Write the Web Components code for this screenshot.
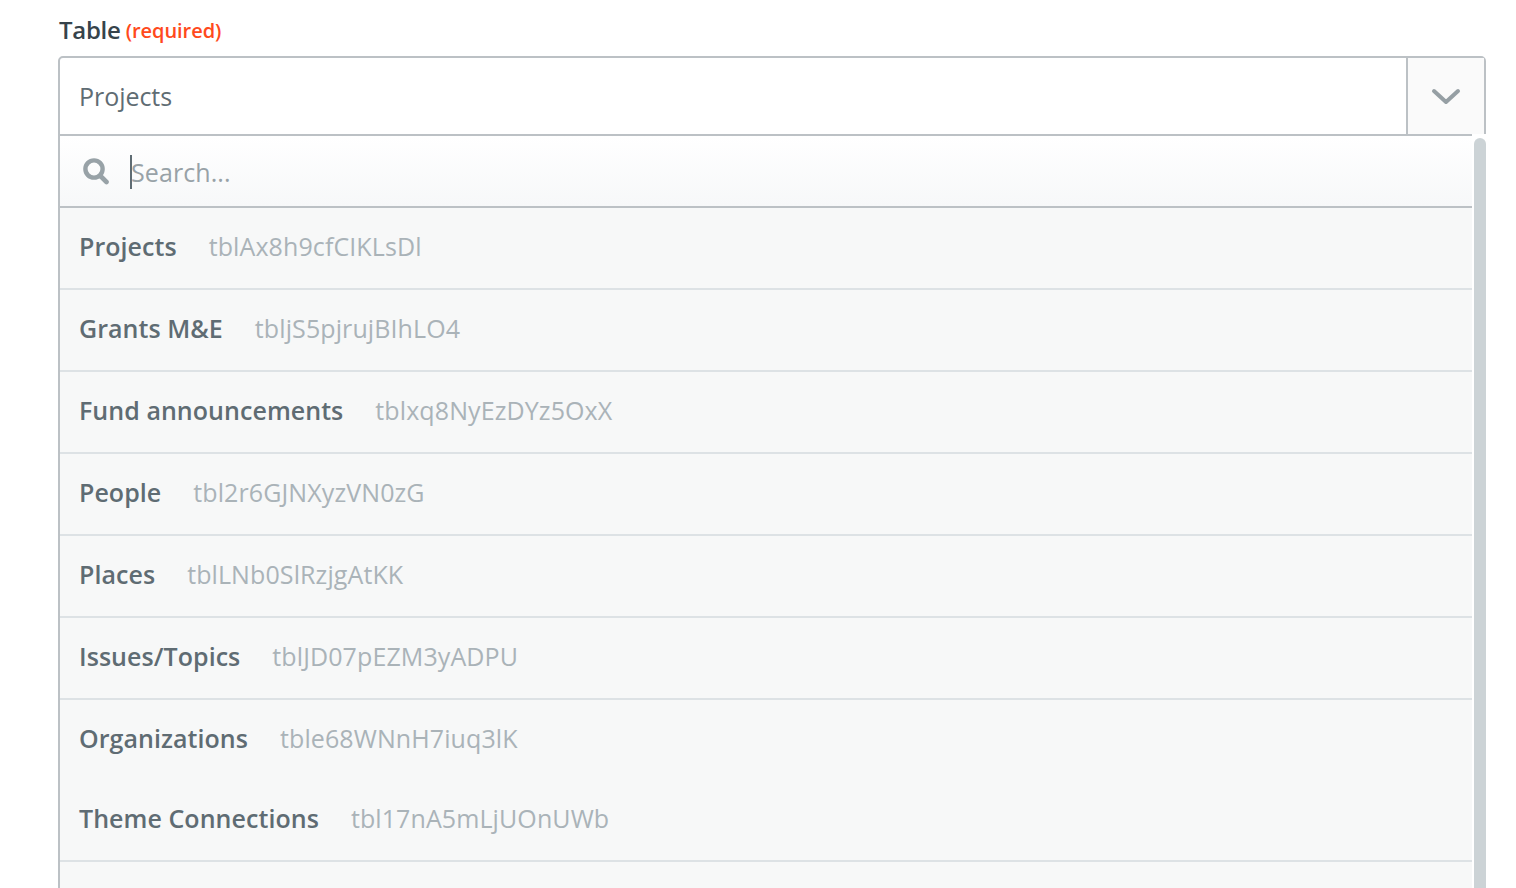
<!DOCTYPE html>
<html>
<head>
<meta charset="utf-8">
<title>Table</title>
<style>
  html, body { margin: 0; height: 100%; overflow: hidden; background: #fff; }
  body { font-family: "Open Sans", sans-serif; padding: 16px 30px 0 58px; box-sizing: border-box; }
</style>
</head>
<body>
<field-label>Table</field-label>
<select-box value="Projects">
  <option-row name="Projects" code="tblAx8h9cfCIKLsDl"></option-row>
  <option-row name="Grants M&amp;E" code="tbljS5pjrujBIhLO4"></option-row>
  <option-row name="Fund announcements" code="tblxq8NyEzDYz5OxX"></option-row>
  <option-row name="People" code="tbl2r6GJNXyzVN0zG"></option-row>
  <option-row name="Places" code="tblLNb0SlRzjgAtKK"></option-row>
  <option-row name="Issues/Topics" code="tblJD07pEZM3yADPU"></option-row>
  <option-row name="Organizations" code="tble68WNnH7iuq3lK" plain></option-row>
  <option-row name="Theme Connections" code="tbl17nA5mLjUOnUWb"></option-row>
</select-box>

<script>
class FieldLabel extends HTMLElement {
  constructor() {
    super();
    this.attachShadow({ mode: "open" }).innerHTML = `
      <style>
        :host { display: block; height: 40px; padding-left: 1px; box-sizing: border-box; line-height: 28px; font-size: 24px; color: #36434b; }
        .name { font-size: 24px; font-weight: 600; letter-spacing: -0.3px; }
        .req { font-size: 20px; font-weight: 600; color: #ff4a1c; letter-spacing: -0.05px; vertical-align: 1.5px; margin-left: -1px; }
      </style>
      <span class="name"><slot></slot></span> <span class="req">(required)</span>
    `;
  }
}

class OptionRow extends HTMLElement {
  constructor() {
    super();
    this.attachShadow({ mode: "open" }).innerHTML = `
      <style>
        :host {
          display: flex;
          align-items: center;
          gap: 32px;
          height: 76px;
          padding: 0 0 4px 19px;
          border-bottom: 2px solid #dde2e5;
          font-size: 25px;
          white-space: nowrap;
        }
        :host([plain]) { border-bottom-color: transparent; height: 75px; padding-bottom: 3px; }
        .name { font-weight: 600; color: #5f6c73; letter-spacing: 0.05px; }
        .code { color: #aab3b8; letter-spacing: 0.1px; }
      </style>
      <span class="name"></span><span class="code"></span>
    `;
  }

  connectedCallback() {
    this.shadowRoot.querySelector(".name").textContent = this.getAttribute("name");
    this.shadowRoot.querySelector(".code").textContent = this.getAttribute("code");
  }
}

class SelectBox extends HTMLElement {
  constructor() {
    super();
    this.attachShadow({ mode: "open" }).innerHTML = `
      <style>
        :host { display: block; }
        .control {
          display: flex;
          height: 76px;
          border: 2px solid #bcc1c5;
          border-radius: 5px 5px 0 0;
          font-size: 25px;
          color: #5f6c73;
        }
        .value { flex: 1; display: flex; align-items: center; padding-left: 19px; letter-spacing: -0.05px; }
        .toggle {
          width: 76px;
          flex: none;
          display: flex;
          align-items: center;
          justify-content: center;
          background: #fafafa;
          border-left: 2px solid #bcc1c5;
        }
        .toggle svg { margin-top: 2px; }
        .panel { display: flex; height: 760px; }
        .list {
          flex: 1;
          min-width: 0;
          border-left: 2px solid #bcc1c5;
        }
        .search {
          display: flex;
          align-items: center;
          height: 70px;
          border-bottom: 2px solid #bcc1c5;
          background: linear-gradient(#fff, #f7f8f9);
          font-size: 25px;
          color: #98a2a7;
          letter-spacing: 0.08px;
        }
        .search svg { margin-left: 23px; flex: none; }
        .search span:last-child { padding-top: 2px; }
        .caret { width: 2px; height: 34px; background: #5f6c73; margin: 2px -1px 0 21px; flex: none; }
        .rows { background: #f7f8f8; height: 100%; }
        .track { width: 12px; flex: none; margin: -2px 0 0 2px; padding: 4px 0 0 0; position: relative; background: #fff; box-shadow: -2px 0 0 #fff; }
        .thumb { height: 100%; background: #ccd3d6; border-radius: 6px 6px 0 0; }
      </style>
      <div class="control">
        <div class="value">${this.getAttribute("value")}</div>
        <div class="toggle">
          <svg width="30" height="18" viewBox="0 0 30 18" fill="none" stroke="#969fa4" stroke-width="4" stroke-linecap="round" stroke-linejoin="round"><path d="M3 3l12 11L27 3"/></svg>
        </div>
      </div>
      <div class="panel">
        <div class="list">
          <div class="search">
            <svg width="26" height="28" viewBox="0 0 26 28" fill="none" stroke="#98a2a7" stroke-linecap="round"><circle cx="11" cy="12" r="8.6" stroke-width="4.4"/><path d="M17.5 19l6 6" stroke-width="4.6"/></svg>
            <span class="caret"></span><span>Search...</span>
          </div>
          <div class="rows"><slot></slot></div>
        </div>
        <div class="track"><div class="thumb"></div></div>
      </div>
    `;
  }
}

customElements.define("field-label", FieldLabel);
customElements.define("option-row", OptionRow);
customElements.define("select-box", SelectBox);
</script>
</body>
</html>
